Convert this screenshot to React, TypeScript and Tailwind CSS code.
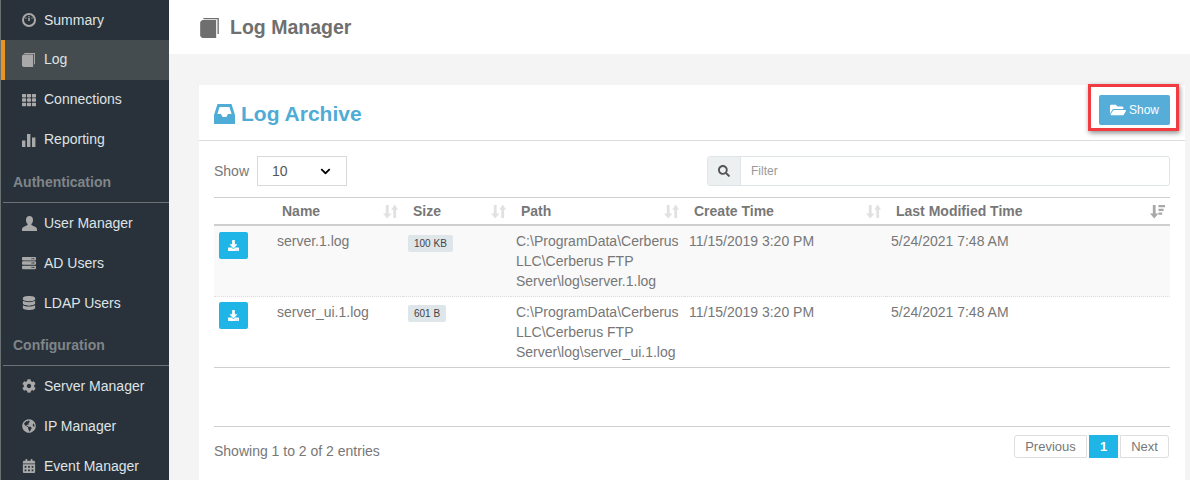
import type { ReactNode } from "react";
import {
  FaCalendarAlt,
  FaChevronDown,
  FaCog,
  FaDatabase,
  FaDownload,
  FaFolderOpen,
  FaGlobeAmericas,
  FaSearch,
  FaServer,
  FaTh,
} from "react-icons/fa";

function DashIcon() {
  return (
    <svg viewBox="0 0 14 14" className="h-[14px] w-[14px] fill-current">
      <path
        fillRule="evenodd"
        d="M7 0a7 7 0 1 1 0 14A7 7 0 0 1 7 0zm0 2a5 5 0 1 0 0 10A5 5 0 0 0 7 2z"
      />
      <path d="M6.4 3h1.2v1.2H6.4zM3.4 4.6h1.2v1.2H3.4zM9.4 4.6h1.2v1.2H9.4zM6.2 4.8h1.6V8H6.2z" />
    </svg>
  );
}

function BookIcon({ className }: { className: string }) {
  return (
    <svg viewBox="0 0 14 15" className={`fill-current ${className}`}>
      <path d="M2 0h12v12h-1V1H3z" />
      <path d="M1.5 1.5H12V15H1.5L0 13.5V3z" />
    </svg>
  );
}

function BarsIcon() {
  return (
    <svg viewBox="0 0 14 14" className="h-[14px] w-[14px] fill-current">
      <path d="M0 7.5h3.4V14H0zM5 1h3.4v13H5zM10 4.5h3.4V14H10z" />
    </svg>
  );
}

function UserIcon() {
  return (
    <svg viewBox="0 0 15 15" className="h-[15px] w-[15px] fill-current">
      <path d="M7.5 0C9.6 0 11 1.6 11 3.9c0 1.6-.6 3-1.4 3.9-.4.5-.3 1.2.3 1.5l3.6 1.7c.9.4 1.5 1.3 1.5 2.4V15H0v-1.6c0-1.1.6-2 1.5-2.4l3.6-1.7c.6-.3.7-1 .3-1.5C4.6 6.9 4 5.5 4 3.9 4 1.6 5.4 0 7.5 0z" />
    </svg>
  );
}

function InboxIcon() {
  return (
    <svg viewBox="0 0 21 20" className="h-5 w-[21px] fill-current">
      <path
        fillRule="evenodd"
        d="M3.5 0h14L21 11v9H0v-9zM5.6 3 3.4 10H7l1.6 3h3.8l1.6-3h3.6l-2.2-7z"
      />
    </svg>
  );
}

function NavItem({
  icon,
  label,
  active,
  raised,
}: {
  icon: ReactNode;
  label: string;
  active?: boolean;
  raised?: boolean;
}) {
  return (
    <div
      className={`flex h-10 items-center text-[14px] text-[#dfe3e6] ${raised ? "pb-px" : ""} ${
        active ? "border-l-4 border-[#e8951f] bg-[#454c50] pl-[17px]" : "pl-[21px]"
      }`}
    >
      <span className="flex w-[22px] shrink-0 text-[14px] text-[#a9a9a9]">{icon}</span>
      {label}
    </div>
  );
}

function NavHeading({ label }: { label: string }) {
  return (
    <div className="ml-[2px] flex h-[43px] items-center border-b border-[#6e7275] pt-[2px] pl-[10px] text-[14px] font-bold text-[#7f8589]">
      {label}
    </div>
  );
}

function SortIcon() {
  return (
    <svg viewBox="0 0 16 16" className="h-[15px] w-[15px] shrink-0 fill-[#e1e1e1]">
      <path d="M3 1h3v9h3l-4.5 5.5L0 10h3z" />
      <path d="M11 15h3V6h2L12.5.5 8.8 6H11z" />
    </svg>
  );
}

function SortedIcon() {
  return (
    <svg viewBox="0 0 16 16" className="h-[15px] w-[15px] shrink-0 fill-[#a8a8a8]">
      <path d="M3 1h3v9h3l-4.5 5.5L0 10h3z" />
      <path d="M9 1h7v2.5H9zM9 5h5.5v2.5H9zM9 9h4v2.5H9z" />
    </svg>
  );
}

const rows = [
  { name: "server.1.log", size: "100 KB", path: "C:\\ProgramData\\Cerberus LLC\\Cerberus FTP Server\\log\\server.1.log" },
  { name: "server_ui.1.log", size: "601 B", path: "C:\\ProgramData\\Cerberus LLC\\Cerberus FTP Server\\log\\server_ui.1.log" },
];

const columns = ["Name", "Size", "Path", "Create Time"];

export default function App() {
  return (
    <div className="flex h-[480px] w-[1190px] overflow-hidden bg-[#f4f4f4] font-['Liberation_Sans',Arial,sans-serif] text-[#777]">
      <aside className="w-[169px] shrink-0 border-l border-[#6a6f72] bg-[#29323a]">
        <NavItem icon={<DashIcon />} label="Summary" />
        <NavItem icon={<BookIcon className="h-[14px] w-[13px]" />} label="Log" active raised />
        <NavItem icon={<FaTh />} label="Connections" raised />
        <NavItem icon={<BarsIcon />} label="Reporting" raised />
        <NavHeading label="Authentication" />
        <NavItem icon={<UserIcon />} label="User Manager" />
        <NavItem icon={<FaServer />} label="AD Users" />
        <NavItem icon={<FaDatabase />} label="LDAP Users" />
        <NavHeading label="Configuration" />
        <NavItem icon={<FaCog />} label="Server Manager" />
        <NavItem icon={<FaGlobeAmericas />} label="IP Manager" />
        <NavItem icon={<FaCalendarAlt />} label="Event Manager" />
      </aside>

      <main className="min-w-0 flex-1">
        <header className="flex h-[54px] items-center gap-[11px] bg-white pt-px pl-[31px] text-[19.5px] font-bold text-[#6f6f6f]">
          <BookIcon className="h-5 w-[19px]" />
          Log Manager
        </header>

        <section className="mt-[31px] mr-[5px] ml-[30px] h-[400px] bg-white">
          <div className="flex h-[56px] items-start justify-between border-b border-[#dcdcdc] pl-[15px]">
            <h2 className="flex h-[56px] items-center gap-[6px] pt-[2px] text-[21px] font-bold text-[#4eacd6]">
              <InboxIcon />
              Log Archive
            </h2>
            <div className="relative z-10 mr-[6px] -mt-px border-[3px] border-[#f03c41] pt-2 pr-[6px] pb-[3px] pl-2 shadow-[1px_2px_5px_rgba(0,0,0,0.45)]">
              <button className="flex h-[30px] w-[71px] items-center justify-center gap-[3px] rounded-[2px] bg-[#55add8] text-[12px] text-white">
                <FaFolderOpen className="text-[16px]" />
                Show
              </button>
            </div>
          </div>

          <div className="px-[15px]">
            <div className="mt-[15px] flex h-[30px] items-center justify-between text-[14px]">
              <div className="flex items-center gap-2">
                Show
                <div className="flex h-[30px] w-[90px] items-center justify-between border border-[#d9d9d9] pr-[15px] pl-[14px] text-[#555]">
                  10
                  <FaChevronDown className="text-[11px] text-black" />
                </div>
              </div>
              <div className="flex h-[30px] w-[463px] overflow-hidden rounded-[3px] border border-[#dfe4e6] text-[12px]">
                <span className="flex w-[33px] items-center justify-center border-r border-[#dfe4e6] bg-[#edf0f1] text-[12px] text-[#555]">
                  <FaSearch />
                </span>
                <span className="flex items-center pl-[10px] text-[#999]">Filter</span>
              </div>
            </div>

            <table className="mt-[11px] w-[956px] table-fixed border-t border-[#cfcfcf] text-left text-[14px]">
              <colgroup>
                <col className="w-[58px]" />
                <col className="w-[131px]" />
                <col className="w-[108px]" />
                <col className="w-[173px]" />
                <col className="w-[202px]" />
                <col className="w-[284px]" />
              </colgroup>
              <thead>
                <tr className="h-[27px] border-b-2 border-[#cfcfcf]">
                  <th />
                  {columns.map((c) => (
                    <th key={c} className="pr-[5px] pl-[10px]">
                      <div className="flex items-center justify-between pt-[2px]">
                        {c}
                        <SortIcon />
                      </div>
                    </th>
                  ))}
                  <th className="pr-[5px] pl-[10px]">
                    <div className="flex items-center justify-between pt-[2px]">
                      Last Modified Time
                      <SortedIcon />
                    </div>
                  </th>
                </tr>
              </thead>
              <tbody>
                {rows.map((row, idx) => (
                  <tr
                    key={row.name}
                    className={`align-top leading-5 ${
                      idx === 0
                        ? "h-[72px] border-b border-dotted border-[#dedede] bg-[#f9f9f9]"
                        : "h-[71px] border-b border-[#cfcfcf]"
                    }`}
                  >
                    <td className={`pl-[5px] ${idx === 0 ? "pt-[6px]" : "pt-[5px]"}`}>
                      <button className="flex h-[27px] w-[29px] items-center justify-center rounded-[2px] bg-[#1fb5e6] text-[11px] text-white">
                        <FaDownload />
                      </button>
                    </td>
                    <td className="pt-[5px] pl-[5px]">{row.name}</td>
                    <td className={`pl-[5px] ${idx === 0 ? "pt-[9px]" : "pt-2"}`}>
                      <span className="block w-fit rounded-[2px] bg-[#dfe6ea] px-[6px] text-[10px] leading-[17px] text-[#444]">
                        {row.size}
                      </span>
                    </td>
                    <td className="pt-[5px] pl-[5px]">{row.path}</td>
                    <td className="pt-[5px] pl-[5px]">11/15/2019 3:20 PM</td>
                    <td className="pt-[5px] pl-[5px]">5/24/2021 7:48 AM</td>
                  </tr>
                ))}
              </tbody>
            </table>

            <div className="mt-[58px] flex items-start justify-between border-t border-[#cfcfcf] pt-2 text-[14px]">
              <span className="mt-[6px]">Showing 1 to 2 of 2 entries</span>
              <div className="mr-px flex gap-[2px] text-[13px]">
                <span className="flex h-[23px] w-[73px] items-center justify-center rounded-l-[3px] border border-[#dedede] pt-px">
                  Previous
                </span>
                <span className="flex h-[23px] w-[29px] items-center justify-center bg-[#1fb5e6] pt-px font-bold text-white">1</span>
                <span className="flex h-[23px] w-[49px] items-center justify-center rounded-r-[3px] border border-[#dedede] pt-px">
                  Next
                </span>
              </div>
            </div>
          </div>
        </section>
      </main>
    </div>
  );
}
